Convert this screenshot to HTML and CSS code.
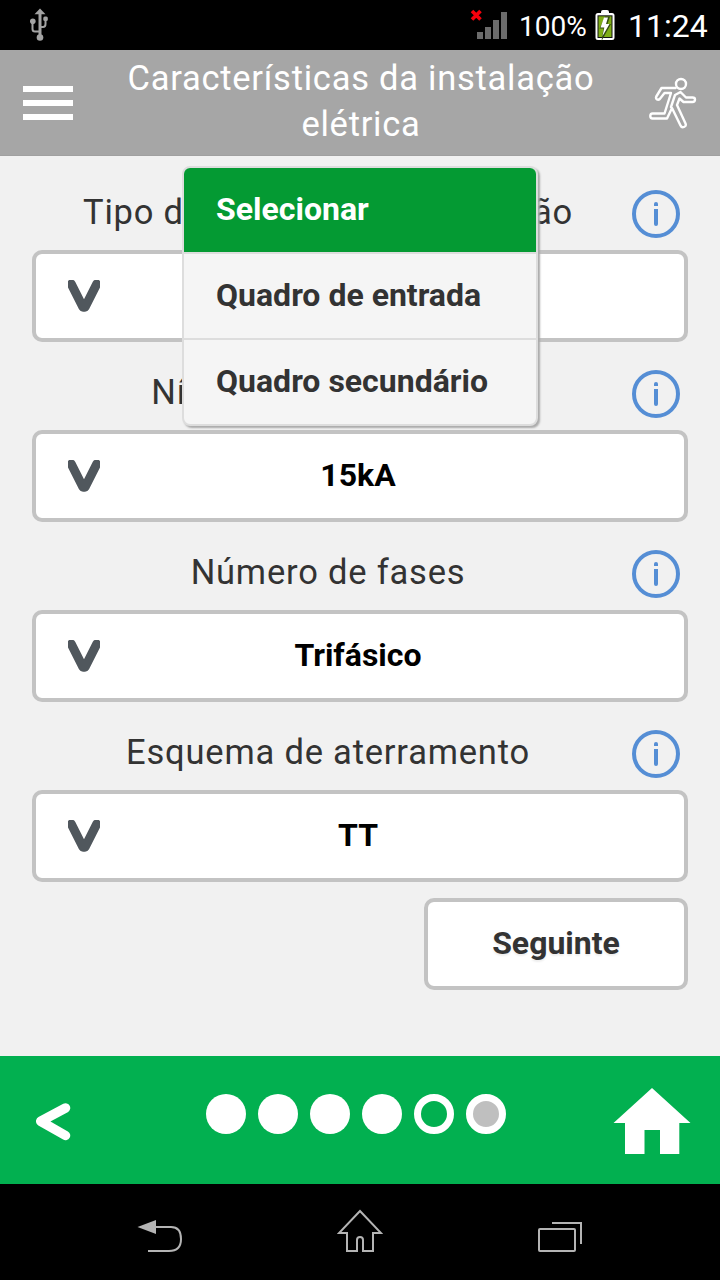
FILE: index.html
```html
<!DOCTYPE html>
<html lang="pt">
<head>
<meta charset="utf-8">
<title>Características da instalação elétrica</title>
<link rel="stylesheet" href="styles.css">
</head>
<body>
<div class="screen">
  <div class="status">
    <svg class="usb" width="20" height="34" viewBox="0 0 20 34" fill="none" stroke="#a3a3a3" stroke-width="2">
      <path d="M10 4V29" stroke-width="3"/><path d="M2.500 13V21Q2.500 23.500 5 23.500H10M15.500 11V16Q15.500 19 13 19H10"/>
      <path d="M4.500 6.300L10 .5L15.500 6.300Z" fill="#a3a3a3" stroke="none"/>
      <circle cx="10" cy="29.500" r="3.300" fill="#a3a3a3" stroke="none"/><circle cx="2.800" cy="13.300" r="2.800" fill="#a3a3a3" stroke="none"/>
      <rect x="13.300" y="8.500" width="4.500" height="4.500" rx="1.500" fill="#a3a3a3" stroke="none"/>
    </svg>
    <div class="status-right">
      <svg class="signal" width="40" height="34" viewBox="0 0 40 34">
        <path d="M9 24h6v7H9zM17 19h6v12h-6zM25 12h6v19h-6zM33 4h6v27h-6z" fill="#6b6b6b"/>
        <path d="M4 3L12.500 11.500M12.500 3L4 11.500" stroke="#f5000c" stroke-width="3.600"/>
      </svg>
      <span class="percent">100%</span>
      <svg class="battery" width="20" height="32" viewBox="0 0 20 32">
        <path d="M6 3V2Q6 0 8 0H12Q14 0 14 2V3H17Q19.500 3 19.500 5.500V27.500Q19.500 30 17 30H3Q.5 30 .5 27.500V5.500Q.5 3 3 3Z" fill="#fff"/>
        <path d="M2.500 5.300h15v22.700h-15z" fill="#111"/><path d="M3.500 6.300h13v20.700h-13z" fill="#7fae16"/>
        <path d="M10 6.500L15 6.500L12.500 14H16L6.500 31L8.500 18.500H4.500Z" fill="#354b13"/>
        <path d="M9 7.500H13L11 14H14.500L7.500 26L9.300 17.500H5.500Z" fill="#fff"/>
      </svg>
      <span class="clock">11:24</span>
    </div>
  </div>

  <header class="header">
    <div class="menu"><i></i><i></i><i></i></div>
    <h1 class="title">Características da instalação<br>elétrica</h1>
    <svg class="runner" width="48" height="52" viewBox="0 0 48 52" fill="none" stroke="#fff" stroke-width="2.400" stroke-linejoin="round" stroke-linecap="round">
      <circle cx="32" cy="7" r="5"/>
      <path d="M26.500 11H12.500L7.300 19.500Q6.500 21.500 8 22.500Q9.500 23.200 10.800 22L15.500 16H22L15.500 36.500H3.500Q1.300 36.500 1.300 39Q1.300 41.500 3.500 41.500H18L23 31L31.500 48.500Q32.700 51 35 50Q37.500 49 36.500 46.500L28 28L30.500 21.500L34.500 25H43.500Q46 25 46 22.500Q46 20.500 43.500 20.500H37L31.500 15L26 18L22 30"/>
    </svg>
  </header>

  <main class="content">
    <section class="field">
      <div class="label-row"><span class="label">Tipo de quadro de distribuição</span><span class="info"><i></i></span></div>
      <div class="select"><svg class="chevron" width="32" height="32" viewBox="0 0 32 32"><path d="M3.300 4L15 27.300H17L28.700 4" /></svg><span></span></div>
    </section>
    <section class="field">
      <div class="label-row"><span class="label">Nível de curto-circuito</span><span class="info"><i></i></span></div>
      <div class="select"><svg class="chevron" width="32" height="32" viewBox="0 0 32 32"><path d="M3.300 4L15 27.300H17L28.700 4" /></svg><span>15kA</span></div>
    </section>
    <section class="field">
      <div class="label-row"><span class="label">Número de fases</span><span class="info"><i></i></span></div>
      <div class="select"><svg class="chevron" width="32" height="32" viewBox="0 0 32 32"><path d="M3.300 4L15 27.300H17L28.700 4" /></svg><span>Trifásico</span></div>
    </section>
    <section class="field">
      <div class="label-row"><span class="label">Esquema de aterramento</span><span class="info"><i></i></span></div>
      <div class="select"><svg class="chevron" width="32" height="32" viewBox="0 0 32 32"><path d="M3.300 4L15 27.300H17L28.700 4" /></svg><span>TT</span></div>
    </section>
    <div class="next">Seguinte</div>
    <div class="popup">
      <div class="option selected">Selecionar</div>
      <div class="option">Quadro de entrada</div>
      <div class="option">Quadro secundário</div>
    </div>
  </main>

  <footer class="footer">
    <svg class="back" width="36" height="40" viewBox="0 0 36 40"><path d="M30.500 6L5.700 19.300L30.500 33.500" fill="none" stroke="#fff" stroke-width="9.500" stroke-linecap="round" stroke-linejoin="round"/></svg>
    <div class="dots"><i></i><i></i><i></i><i></i><i class="current"></i><i class="pending"></i></div>
    <svg class="home" width="78" height="66" viewBox="0 0 78 66"><path d="M39 0L77.500 35H66.300V66H47V42H31.500V66H12V35H.5Z" fill="#fff"/></svg>
  </footer>

  <nav class="navbar">
    <svg width="46" height="34" viewBox="0 0 46 34"><path d="M19 8H34Q44 8 44 20Q44 32 32 32H11" fill="none" stroke="#b4b4b4" stroke-width="2"/><path d="M.5 8L19 1V15Z" fill="#b4b4b4"/></svg>
    <svg class="nav-home" width="46" height="44" viewBox="0 0 46 44"><path d="M23 2L44 24H36V42H26V31Q26 28 23 28Q20 28 20 31V42H10V24H2Z" fill="none" stroke="#b4b4b4" stroke-width="2"/></svg>
    <svg width="46" height="32" viewBox="0 0 46 32" fill="none" stroke="#b4b4b4" stroke-width="2"><rect x="2" y="8" width="36" height="22" rx="1"/><path d="M15 2H44V23"/></svg>
  </nav>
</div>
</body>
</html>
```
FILE: styles.css
```css
* { box-sizing: border-box; }
body { margin: 0; font-family: Roboto, sans-serif; }
svg { display: block; flex: none; }
.screen { width: 720px; height: 1280px; display: flex; flex-direction: column; overflow: hidden; background: #f1f1f1; }
.status { height: 50px; flex: none; background: #000; color: #fff; display: flex; justify-content: space-between; padding: 0 12px 0 30px; }
.usb { margin-top: 8px; }
.status-right { display: flex; line-height: 50px; white-space: nowrap; }
.signal { margin: 8px 11px 0 0; }
.percent { font-size: 28px; width: 76px; padding-top: 2px; }
.battery { margin-top: 10px; margin-right: 13px; }
.clock { font-size: 32px; width: 80px; padding-top: 1px; }
.header { height: 106px; flex: none; background: #a6a6a6; display: flex; justify-content: space-between; padding: 0 23px; border-bottom: 1px solid #a0a0a0; }
.menu { width: 50px; margin-top: 36px; display: flex; flex-direction: column; gap: 8px; }
.menu i { height: 6px; background: #fff; }
.title { margin: 5px 0 0; width: 520px; text-align: center; color: #fff; font-size: 34.500px; font-weight: 400; line-height: 46px; letter-spacing: .75px; }
.runner { margin-top: 27px; }
.content { position: relative; flex: 1; padding: 16px 32px 0; display: flex; flex-direction: column; }
.field { height: 180px; flex: none; }
.label-row { height: 78px; display: flex; color: #333; }
.label { width: 592px; text-align: center; font-size: 34.500px; line-height: 80px; letter-spacing: .8px; white-space: nowrap; }
.info { width: 48px; height: 48px; margin-top: 18px; margin-left: 8px; border: 4px solid #558ed5; border-radius: 50%; display: flex; justify-content: center; padding-top: 8px; }
.info i { width: 4px; height: 24px; background: linear-gradient(#558ed5 4px, transparent 4px, transparent 7px, #558ed5 7px); border-radius: 2px; }
.select, .next { height: 92px; border: 4px solid #c3c3c3; border-radius: 10px; background: #fff; font-size: 32px; font-weight: 700; }
.select { display: flex; align-items: center; color: #000; padding: 0 32px; }
.select span { flex: 1; text-align: center; padding-right: 36px; line-height: 78px; margin-top: -3px; }
.chevron path { fill: none; stroke: #50575d; stroke-width: 9; stroke-linecap: round; stroke-linejoin: round; }
.next { width: 264px; margin-top: 6px; align-self: flex-end; text-align: center; line-height: 82px; color: #333; text-shadow: 0 2px 2px #eee; }
.popup { position: absolute; left: 182px; top: 10px; width: 356px; height: 260px; border: 2px solid #ddd; border-radius: 8px; background: #f5f5f5; box-shadow: 2px 2px 2px #aaa; overflow: hidden; }
.option { height: 86px; border-bottom: 2px solid #ddd; padding-left: 32px; line-height: 82px; font-size: 32px; font-weight: 700; color: #333; }
.option:last-child { border-bottom: 0; }
.selected { background: #049a33; color: #fff; }
.footer { height: 128px; flex: none; background: #02b050; display: flex; justify-content: space-between; padding: 0 29px 0 35px; }
.back { margin-top: 46px; }
.dots { display: flex; gap: 12px; margin-top: 38px; margin-left: 27px; }
.dots i { width: 40px; height: 40px; border-radius: 50%; background: #fff; }
.dots .current { border: 7px solid #fff; background: #02b050; }
.dots .pending { border: 7px solid #fff; background: #bfbfbf; }
.home { margin-top: 32px; }
.navbar { height: 96px; flex: none; background: #000; display: flex; justify-content: space-between; align-items: flex-end; padding: 0 137px 27px; }
```
